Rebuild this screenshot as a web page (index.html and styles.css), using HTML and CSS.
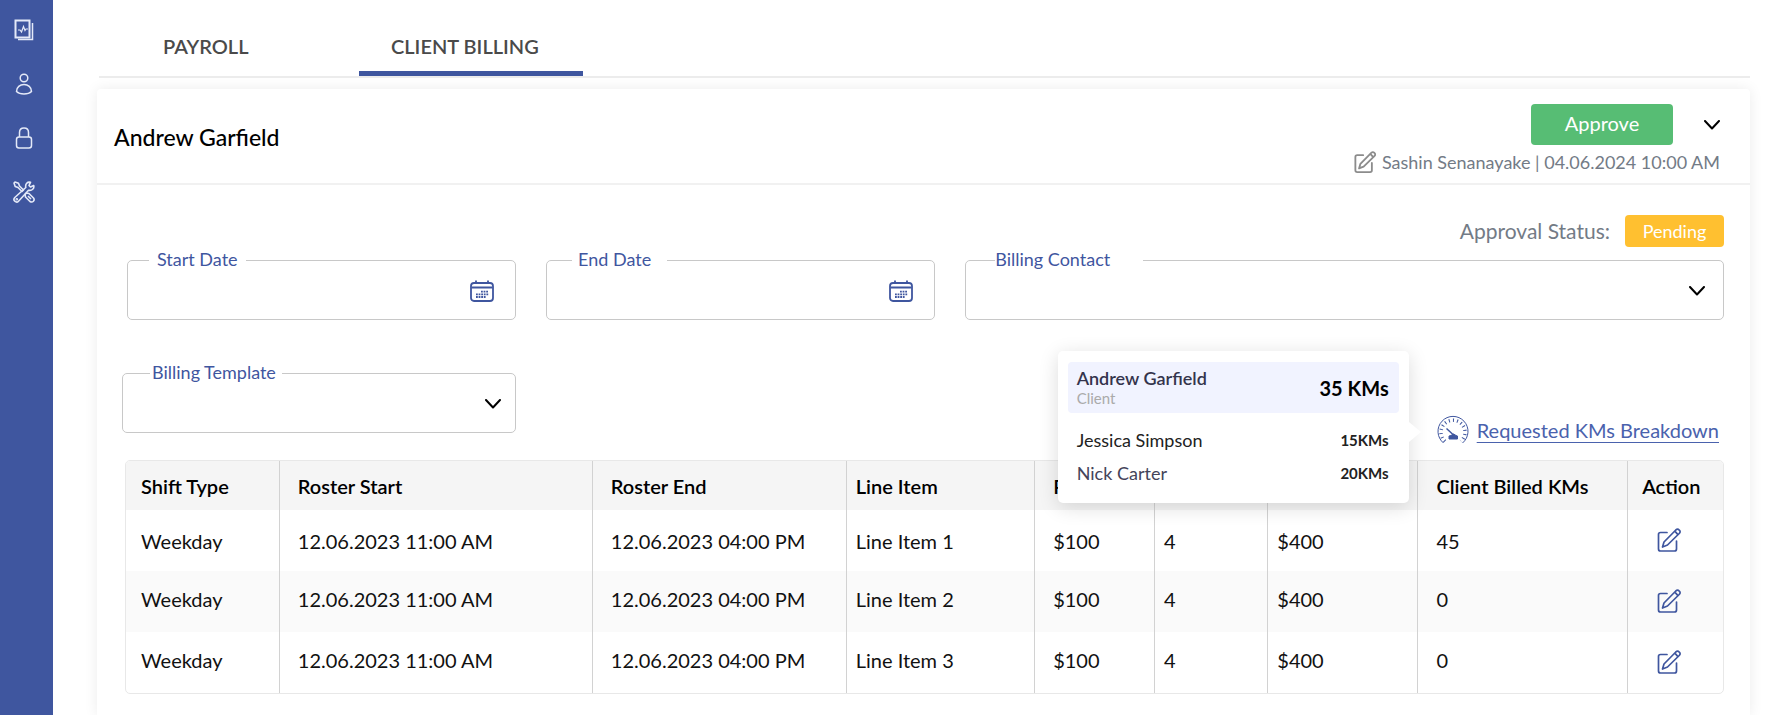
FILE: index.html
```html
<!DOCTYPE html>
<html lang="en">
<head>
<meta charset="utf-8">
<meta name="viewport" content="width=device-width, initial-scale=1">
<title>Client Billing</title>
<link rel="stylesheet" href="styles.css">
</head>
<body>
<svg class="sprite" aria-hidden="true">
  <symbol id="edit" viewBox="0 0 24 24" fill="none" stroke="currentColor" stroke-linecap="round" stroke-linejoin="round">
    <path d="M10 4.500H3.500Q1.500 4.500 1.500 6.500V21Q1.500 23 3.500 23H17.500Q19.500 23 19.500 21V13"/>
    <path d="M5.500 19L7 14L18.800 2Q20.600 .4 22.300 2.100Q24 3.700 22.200 5.500L10.500 17ZM17.800 3.200L21 6.600"/>
  </symbol>
  <symbol id="chevron" viewBox="0 0 16 10" fill="none" stroke="currentColor" stroke-width="2" stroke-linecap="round" stroke-linejoin="round">
    <path d="M1 1L8 8.500L15 1"/>
  </symbol>
  <symbol id="calendar" viewBox="0 0 24 22" fill="none" stroke="currentColor" stroke-width="1.800">
    <rect x="1" y="3" width="22" height="18" rx="3"/>
    <path d="M1.500 7.500H22.500M6 .5V3M18 .5V3"/>
    <path stroke-width="1.800" stroke-dasharray="1.800 .8" d="M11 11.600H18.800M6 14.400H18.800M6 17H16"/>
  </symbol>
</svg>

<nav class="sidebar" aria-label="Main">
  <a href="#" aria-label="Reports"><svg width="20" height="22" viewBox="0 0 20 22" fill="none" stroke="currentColor"><rect x="1.500" y="1.500" width="14" height="17" stroke-width="2"/><path d="M4 20.500H18.500V4" stroke-width="1.500"/><path d="M4 11H6L7.500 13L9.500 7.500L11 11.500L12 10H14" stroke-width="1.200"/></svg></a>
  <a href="#" aria-label="Clients"><svg width="20" height="22" viewBox="0 0 20 22" fill="none" stroke="currentColor" stroke-width="1.500"><circle cx="10" cy="5" r="3.800"/><path d="M2.500 18.500C2.500 14 6 11.500 10 11.500S17.500 14 17.500 18.500C16 20 13 21 10 21S4 20 2.500 18.500Z"/></svg></a>
  <a href="#" aria-label="Security"><svg width="20" height="22" viewBox="0 0 20 22" fill="none" stroke="currentColor" stroke-width="1.500"><rect x="2.500" y="10" width="15" height="11" rx="2.500"/><path d="M5.500 10V5.500C5.500 2.800 7.300 1 10 1S14.500 2.800 14.500 5.500V10"/></svg></a>
  <a href="#" aria-label="Settings"><svg width="22" height="22" viewBox="0 0 22 22" fill="none" stroke="currentColor" stroke-width="1.600" stroke-linejoin="round"><path d="M2 1L5.500 2.200L6.500 5L10.500 9L9 10.500L5 6.500L2.200 5.500L1 2Z"/><path d="M12 13.500L13.500 12L16 12.500L20.500 17Q21.800 18.800 20.400 20.200Q19 21.600 17 20.500L12.500 16Z M15 15L18 18"/><path d="M20.700 4.500L17.500 6L16 4.500L17.500 1.300C14.500 .5 12 3 12.800 6.500L1.800 16.500C.5 18 .8 19.300 1.800 20.200S4.300 21.500 5.500 20.200L15.500 9.200C19 10 21.500 7.500 20.700 4.500Z"/><circle cx="3.800" cy="18.300" r=".5"/></svg></a>
</nav>

<main class="page">
  <nav class="tabs" aria-label="Sections">
    <a class="tab" href="#">PAYROLL</a>
    <a class="tab tab-active" href="#" aria-current="page">CLIENT BILLING</a>
  </nav>

  <section class="card">
    <header class="card-header">
      <h1 class="card-title">Andrew Garfield</h1>
      <div class="approval">
        <div class="approval-actions">
          <button class="approve" type="button">Approve</button>
          <button class="toggle" type="button" aria-label="Collapse"><svg width="16" height="10"><use href="#chevron"/></svg></button>
        </div>
        <div class="audit"><svg width="22" height="22" stroke-width="2"><use href="#edit"/></svg><span>Sashin Senanayake | 04.06.2024 10:00 AM</span></div>
      </div>
    </header>

    <div class="card-body">
      <div class="status"><span>Approval Status:</span><span class="badge">Pending</span></div>

      <div class="fields">
        <fieldset class="field field-date">
          <legend><label for="start">Start Date</label></legend>
          <input id="start" type="text">
          <svg width="24" height="22"><use href="#calendar"/></svg>
        </fieldset>
        <fieldset class="field field-date">
          <legend class="legend-wide"><label for="end">End Date</label></legend>
          <input id="end" type="text">
          <svg width="24" height="22"><use href="#calendar"/></svg>
        </fieldset>
        <fieldset class="field field-select">
          <legend class="legend-contact"><label for="contact">Billing Contact</label></legend>
          <select id="contact"><option></option></select>
          <svg width="16" height="10"><use href="#chevron"/></svg>
        </fieldset>
      </div>

      <div class="template-row">
        <fieldset class="field field-select field-template">
          <legend class="legend-tight"><label for="template">Billing Template</label></legend>
          <select id="template"><option></option></select>
          <svg width="16" height="10"><use href="#chevron"/></svg>
        </fieldset>
        <div class="breakdown">
          <svg class="gauge" width="32" height="30" viewBox="0 0 32 30" fill="none" stroke="currentColor">
            <path d="M6.500 28A15 15 0 1 1 25.500 28"/>
            <path stroke-width="3.500" stroke-dasharray="1 3.100" d="M8 26.200A12 12 0 1 1 24 26.200"/>
            <path stroke-width="1.500" d="M9.500 13.500L16.500 20"/>
            <path fill="currentColor" d="M14 20.500Q16.500 17.500 19 20.500L20.500 21V24H12V21Z"/>
          </svg>
          <a class="breakdown-link" href="#">Requested KMs Breakdown</a>
          <div class="popover">
            <div class="popover-client">
              <div><div class="client-name">Andrew Garfield</div><div class="client-role">Client</div></div>
              <strong class="client-total">35 KMs</strong>
            </div>
            <div class="popover-line"><span>Jessica Simpson</span><strong>15KMs</strong></div>
            <div class="popover-line popover-line-muted"><span>Nick Carter</span><strong>20KMs</strong></div>
          </div>
        </div>
      </div>

      <div class="table-wrap">
        <table class="shifts">
          <colgroup><col class="c-type"><col class="c-start"><col class="c-end"><col class="c-item"><col class="c-rate"><col class="c-hours"><col class="c-total"><col class="c-kms"><col class="c-action"></colgroup>
          <thead>
            <tr><th>Shift Type</th><th class="roomy">Roster Start</th><th class="roomy">Roster End</th><th>Line Item</th><th class="roomy">Rate</th><th>Hours</th><th>Total</th><th class="roomy">Client Billed KMs</th><th class="action">Action</th></tr>
          </thead>
          <tbody>
            <tr><td>Weekday</td><td class="roomy">12.06.2023 11:00 AM</td><td class="roomy">12.06.2023 04:00 PM</td><td>Line Item 1</td><td class="roomy">$100</td><td>4</td><td>$400</td><td class="roomy">45</td><td class="action"><button type="button" aria-label="Edit line item 1"><svg width="24" height="24" stroke-width="1.700"><use href="#edit"/></svg></button></td></tr>
            <tr><td>Weekday</td><td class="roomy">12.06.2023 11:00 AM</td><td class="roomy">12.06.2023 04:00 PM</td><td>Line Item 2</td><td class="roomy">$100</td><td>4</td><td>$400</td><td class="roomy">0</td><td class="action"><button type="button" aria-label="Edit line item 2"><svg width="24" height="24" stroke-width="1.700"><use href="#edit"/></svg></button></td></tr>
            <tr><td>Weekday</td><td class="roomy">12.06.2023 11:00 AM</td><td class="roomy">12.06.2023 04:00 PM</td><td>Line Item 3</td><td class="roomy">$100</td><td>4</td><td>$400</td><td class="roomy">0</td><td class="action"><button type="button" aria-label="Edit line item 3"><svg width="24" height="24" stroke-width="1.700"><use href="#edit"/></svg></button></td></tr>
          </tbody>
        </table>
      </div>
    </div>
  </section>
</main>
</body>
</html>
```
FILE: styles.css
```css
:root {
  --blue: #3f569f;
  --ink: #111;
  --grey: #737b86;
  --line: #c8c8c8;
}

* {
  box-sizing: border-box;
}

body {
  display: flex;
  min-height: 100vh;
  margin: 0;
  background: #fff;
  color: var(--ink);
  font: 20px/24px Lato, "Open Sans", sans-serif;
}

button,
input,
select {
  margin: 0;
  padding: 0;
  border: 0;
  background: none;
  color: inherit;
  font: inherit;
}

button {
  cursor: pointer;
}

svg {
  display: block;
  flex: none;
}

.sprite {
  position: absolute;
  width: 0;
  height: 0;
}

.sidebar {
  display: flex;
  flex: none;
  flex-direction: column;
  align-items: center;
  gap: 32px;
  width: 53px;
  padding: 19px 5px 0 0;
  background: var(--blue);
}

.sidebar a {
  color: #e4e9f8;
}

.page {
  display: flex;
  flex: 1;
  flex-direction: column;
  min-width: 0;
  padding: 0 28px 0 44px;
}

.tabs {
  display: flex;
  height: 78px;
  margin-left: 2px;
  padding: 0 36px;
  border-bottom: 2px solid #ececec;
}

.tab {
  display: flex;
  align-items: center;
  width: 224px;
  padding: 21px 0 0 32px;
  border-bottom: 5px solid transparent;
  color: #4a4a4a;
  font-weight: 600;
  text-decoration: none;
  white-space: nowrap;
}

.tab:first-child {
  padding-left: 28px;
}

.tab-active {
  border-bottom-color: var(--blue);
}

.card {
  flex: 1;
  margin-top: 11px;
  border-radius: 4px 4px 0 0;
  background: #fff;
  box-shadow: 0 0 14px rgba(0, 0, 0, 0.08);
}

.card-header {
  display: flex;
  align-items: flex-start;
  justify-content: space-between;
  min-height: 96px;
  padding: 15px 30px 9px 17px;
  border-bottom: 2px solid #f1f1f1;
}

.card-title {
  margin: 19px 0 0;
  color: #000;
  font-size: 23px;
  font-weight: 500;
  line-height: 28px;
}

.approval-actions {
  display: flex;
  align-items: center;
  justify-content: flex-end;
  gap: 31px;
}

.approve {
  width: 142px;
  height: 41px;
  padding-bottom: 4px;
  border-radius: 4px;
  background: #57bd74;
  color: #fff;
}

.toggle {
  display: flex;
  color: #000;
}

.audit {
  display: flex;
  align-items: center;
  justify-content: flex-end;
  gap: 6px;
  margin-top: 5px;
  color: var(--grey);
  font-size: 18px;
}

.audit svg {
  color: #8c8c8c;
}

.card-body {
  padding: 30px 26px 22px 25px;
}

.status {
  display: flex;
  align-items: center;
  justify-content: flex-end;
  gap: 15px;
  color: var(--grey);
  font-size: 21px;
}

.badge {
  width: 99px;
  border-radius: 4px;
  background: #ffc030;
  color: #fff;
  font-size: 18px;
  line-height: 32px;
  text-align: center;
}

.fields {
  display: grid;
  grid-template-columns: 40fr 40fr 78fr;
  gap: 30px;
  margin: 2px 0 42px 5px;
}

.field {
  display: flex;
  align-items: center;
  min-width: 0;
  height: 71px;
  margin: 0;
  padding: 0 21px 8px;
  border: 1px solid var(--line);
  border-radius: 5px;
}

.field legend {
  padding: 0 8px 2px;
  color: var(--blue);
  font-size: 18px;
  line-height: 20px;
}

.field .legend-wide {
  margin-left: 4px;
  padding: 0 16px 2px 6px;
}

.field .legend-contact {
  margin-left: 8px;
  padding: 0 33px 2px 0;
}

.field .legend-tight {
  margin-left: 6px;
  padding: 0 6px 2px 2px;
}

.field input,
.field select {
  flex: 1;
  min-width: 0;
  height: 40px;
  appearance: none;
}

.field-date svg {
  color: var(--blue);
}

.field-select {
  padding-right: 18px;
}

.field-select svg {
  color: #000;
  pointer-events: none;
}

.field-template {
  width: 24.6%;
  padding-right: 14px;
}

.template-row {
  display: flex;
  align-items: flex-end;
  justify-content: space-between;
  margin-bottom: 27px;
}

.breakdown {
  position: relative;
  display: flex;
  align-items: center;
  gap: 8px;
  height: 30px;
  margin: 0 5px -12px 0;
  color: var(--blue);
}

.breakdown-link {
  color: #4a62ad;
  text-decoration-thickness: 1px;
  text-underline-offset: 4px;
}

.popover {
  position: absolute;
  z-index: 1;
  right: calc(100% + 28px);
  bottom: -58px;
  width: 351px;
  padding: 11px 10px 13px;
  border-radius: 5px;
  background: #fff;
  box-shadow: 0 4px 20px rgba(0, 0, 0, 0.14);
  color: #222;
}

.popover::after {
  position: absolute;
  top: 71px;
  left: 100%;
  border: 10px solid transparent;
  border-right-width: 0;
  border-left: 12px solid #fff;
  content: "";
}

.popover-client {
  display: flex;
  align-items: center;
  justify-content: space-between;
  margin-bottom: 11px;
  padding: 6px 10px 5px 9px;
  border-radius: 4px;
  background: #f1f3ff;
}

.client-name {
  color: #34344c;
  font-size: 18px;
  font-weight: 600;
  line-height: 20px;
}

.client-role {
  color: #aaa;
  font-size: 15px;
  line-height: 20px;
}

.client-total {
  color: #000;
  font-size: 20px;
}

.popover-line {
  display: flex;
  align-items: center;
  justify-content: space-between;
  padding: 0 10px 0 9px;
  font-size: 18px;
  line-height: 33px;
}

.popover-line strong {
  color: #222;
  font-size: 15px;
}

.popover-line-muted {
  color: #44445a;
}

.table-wrap {
  margin-left: 3px;
  overflow: hidden;
  border: 1px solid #e8e8e8;
  border-radius: 5px;
}

.shifts {
  width: 100%;
  border-collapse: collapse;
  table-layout: fixed;
}

.c-type { width: 9.6%; }
.c-start { width: 19.6%; }
.c-end { width: 15.9%; }
.c-item { width: 11.8%; }
.c-rate { width: 7.5%; }
.c-hours { width: 7.1%; }
.c-total { width: 9.4%; }
.c-kms { width: 13.1%; }
.c-action { width: 6%; }

.shifts th,
.shifts td {
  height: 61px;
  padding: 0 0 0 9px;
  text-align: left;
  white-space: nowrap;
}

.shifts th {
  height: 49px;
  background: #f5f5f5;
  color: #000;
  font-weight: 600;
}

.shifts th + th,
.shifts td + td {
  border-left: 1px solid #d2d2d2;
}

.shifts th:first-child,
.shifts td:first-child {
  padding-left: 15px;
}

.shifts .roomy {
  padding-left: 18px;
}

.shifts .action {
  padding: 0 12px 0 0;
  text-align: center;
}

.shifts th.action {
  padding: 0 8px 0 0;
}

.shifts tbody tr:nth-child(even) {
  background: #fafafa;
}

.shifts tbody tr + tr td {
  padding-bottom: 5px;
}

.shifts button {
  color: var(--blue);
  vertical-align: middle;
}

.shifts button svg {
  margin-bottom: 3px;
}
```
